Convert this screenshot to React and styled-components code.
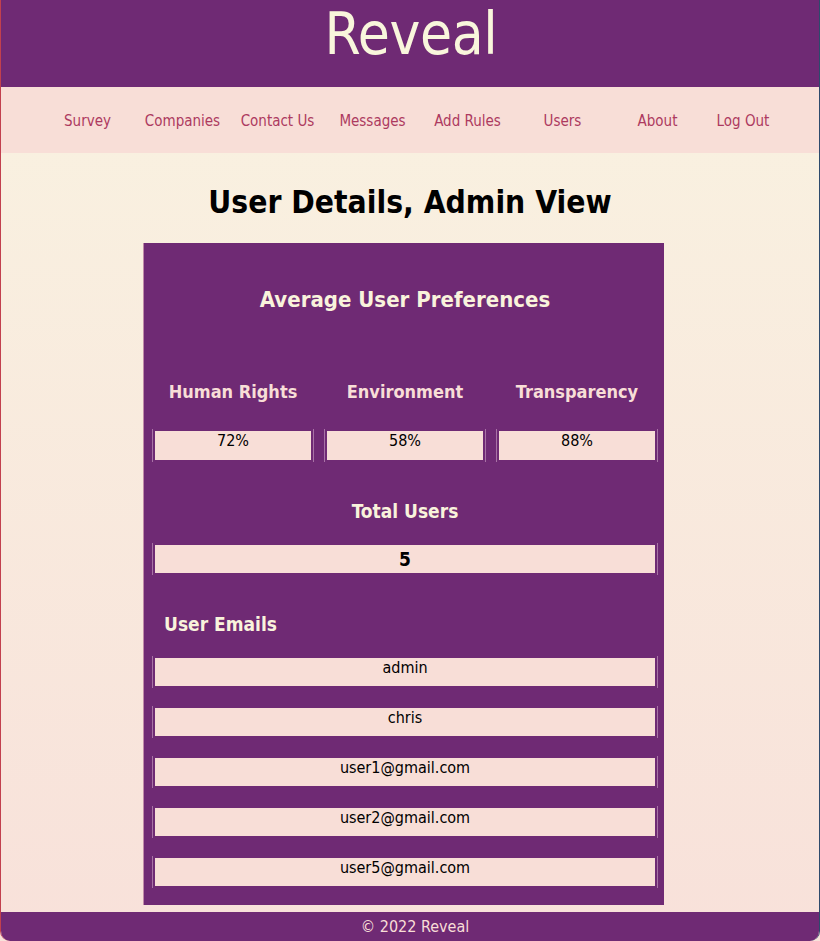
import React from "react";
import styled, { createGlobalStyle } from "styled-components";

const Global = createGlobalStyle`
  html, body { margin: 0; padding: 0; }
  body {
    font-family: "DejaVu Sans Condensed", Tahoma, "DejaVu Sans", sans-serif;
    background: #f8e2da;
  }
  * { box-sizing: border-box; }
`;

const Frame = styled.div`
  min-height: 941px;
  display: flex;
  flex-direction: column;
  border-left: 1px solid #c2404e;
  border-right: 1px solid #2d4a6c;
  border-bottom-left-radius: 10px;
  border-bottom-right-radius: 10px;
  overflow: hidden;
  background: linear-gradient(#f9f3e1 0%, #f8e1da 100%);
`;

const Header = styled.header`
  flex-shrink: 0;
  height: 87px;
  background: #6f2a74;
  display: flex;
  justify-content: center;
  align-items: flex-start;
`;

const Title = styled.h1`
  margin: 0;
  font-weight: normal;
  font-size: 58px;
  line-height: 68px;
  color: #f9f6dc;
  letter-spacing: -0.4px;
  padding-left: 2px;
`;

const Nav = styled.nav`
  flex-shrink: 0;
  height: 66px;
  background: #f8ded7;
  display: flex;
  align-items: center;
  padding: 2px 0 0 39px;
`;

const NavLink = styled.a`
  width: ${(p) => (p.$last ? 76 : 95)}px;
  text-align: center;
  font-size: 15px;
  color: #ad3a60;
  text-decoration: none;
  cursor: pointer;
`;

const Main = styled.main`
  flex: 1 0 auto;
  display: flex;
  flex-direction: column;
`;

const PageTitle = styled.h2`
  margin: 29px 0 0;
  text-align: center;
  font-size: 31.5px;
  line-height: 40px;
  font-weight: bold;
  color: #000;
`;

const Card = styled.section`
  margin: 21px 0 0 142px;
  width: 521px;
  background: #6f2a74;
  border-left: 1px solid #c08aa8;
  padding: 0 6px 17px 8px;
  display: flex;
  flex-direction: column;
`;

const CardTitle = styled.h3`
  margin: 43px 0 0;
  text-align: center;
  font-size: 22px;
  line-height: 28px;
  font-weight: bold;
  color: #f9f3dc;
`;

const PrefGrid = styled.div`
  margin-top: 66px;
  display: grid;
  grid-template-columns: repeat(3, 1fr);
  column-gap: 10px;
  row-gap: 26px;
`;

const PrefLabel = styled.div`
  text-align: center;
  font-size: 18px;
  line-height: 23px;
  font-weight: bold;
  color: #f8ded7;
`;

const Field = styled.div`
  height: ${(p) => p.$h || 33}px;
  background: #f8ded7;
  border: 2px solid #6f2a74;
  box-shadow: -1px 0 0 #a872a5, 1px 0 0 #a872a5;
  margin: 0 1px;
  text-align: center;
  color: #000;
  font-size: ${(p) => (p.$big ? 19 : 16)}px;
  font-weight: ${(p) => (p.$big ? "bold" : "normal")};
  line-height: ${(p) => (p.$big ? "28px" : "19px")};
`;

const SectionTitle = styled.h4`
  margin: 37px 0 20px;
  text-align: ${(p) => (p.$left ? "left" : "center")};
  padding-left: ${(p) => (p.$left ? 12 : 0)}px;
  font-size: 19px;
  line-height: 24px;
  font-weight: bold;
  color: #f9f3dc;
`;

const EmailList = styled.div`
  display: flex;
  flex-direction: column;
  gap: 18px;
`;

const Spacer = styled.div`
  flex: 1;
`;

const Footer = styled.footer`
  flex-shrink: 0;
  height: 29px;
  margin-top: 7px;
  background: #6f2a74;
  color: #f8ded7;
  font-size: 16px;
  display: flex;
  align-items: center;
  justify-content: center;
  padding-left: 10px;
  padding-bottom: 1px;
`;

const links = ["Survey", "Companies", "Contact Us", "Messages", "Add Rules", "Users", "About", "Log Out"];
const prefs = [
  ["Human Rights", "72%"],
  ["Environment", "58%"],
  ["Transparency", "88%"],
];
const emails = ["admin", "chris", "user1@gmail.com", "user2@gmail.com", "user5@gmail.com"];

export default function App() {
  return (
    <>
      <Global />
      <Frame>
        <Header>
          <Title>Reveal</Title>
        </Header>
        <Nav>
          {links.map((l, i) => (
            <NavLink key={l} $last={i === links.length - 1}>{l}</NavLink>
          ))}
        </Nav>
        <Main>
          <PageTitle>User Details, Admin View</PageTitle>
          <Card>
            <CardTitle>Average User Preferences</CardTitle>
            <PrefGrid>
              {prefs.map(([l]) => (
                <PrefLabel key={l}>{l}</PrefLabel>
              ))}
              {prefs.map(([l, v]) => (
                <Field key={l + "v"}>{v}</Field>
              ))}
            </PrefGrid>
            <SectionTitle>Total Users</SectionTitle>
            <Field $h={32} $big>5</Field>
            <SectionTitle $left>User Emails</SectionTitle>
            <EmailList>
              {emails.map((e) => (
                <Field key={e} $h={32}>{e}</Field>
              ))}
            </EmailList>
          </Card>
          <Spacer />
        </Main>
        <Footer>© 2022 Reveal</Footer>
      </Frame>
    </>
  );
}
